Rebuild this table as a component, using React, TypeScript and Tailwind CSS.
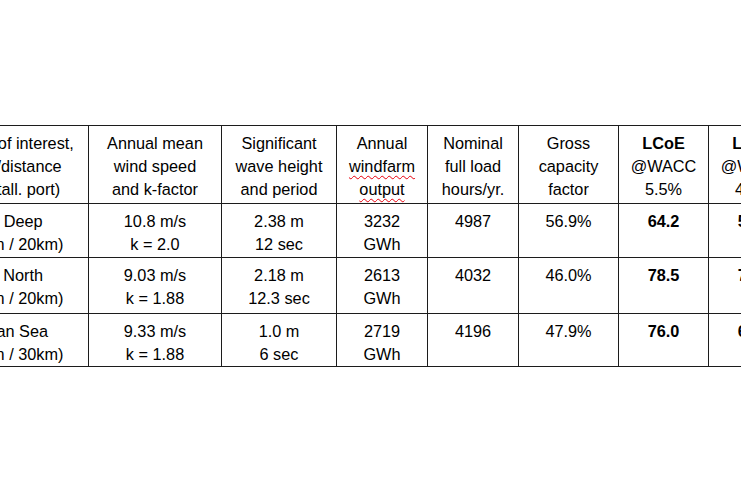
import React from 'react';

type Cell = { lines: React.ReactNode[]; bold?: boolean };

const colWidths = [146, 133, 115, 91, 91, 100, 90, 90];

const Squiggle = ({ children }: { children: React.ReactNode }) => (
  <span className="underline decoration-wavy decoration-red-600 decoration-1 underline-offset-[3px]">
    {children}
  </span>
);

const header: Cell[] = [
  { lines: ['Sites of interest,', 'WD/distance', '(install. port)'] },
  { lines: ['Annual mean', 'wind speed', 'and k-factor'] },
  { lines: ['Significant', 'wave height', 'and period'] },
  { lines: ['Annual', <Squiggle key="w">windfarm</Squiggle>, <Squiggle key="o">output</Squiggle>] },
  { lines: ['Nominal', 'full load', 'hours/yr.'] },
  { lines: ['Gross', 'capacity', 'factor'] },
  { lines: [<b key="l">LCoE</b>, '@WACC', '5.5%'] },
  { lines: [<b key="l">LCoE</b>, '@WACC', '4.0%'] },
];

const rows: Cell[][] = [
  [
    { lines: ['E Deep', '(50m / 20km)'] },
    { lines: ['10.8 m/s', 'k = 2.0'] },
    { lines: ['2.38 m', '12 sec'] },
    { lines: ['3232', 'GWh'] },
    { lines: ['4987'] },
    { lines: ['56.9%'] },
    { lines: ['64.2'], bold: true },
    { lines: ['55.1'], bold: true },
  ],
  [
    { lines: ['E North', '(40m / 20km)'] },
    { lines: ['9.03 m/s', 'k = 1.88'] },
    { lines: ['2.18 m', '12.3 sec'] },
    { lines: ['2613', 'GWh'] },
    { lines: ['4032'] },
    { lines: ['46.0%'] },
    { lines: ['78.5'], bold: true },
    { lines: ['71.4'], bold: true },
  ],
  [
    { lines: ['Man Sea', '(60m / 30km)'] },
    { lines: ['9.33 m/s', 'k = 1.88'] },
    { lines: ['1.0 m', '6 sec'] },
    { lines: ['2719', 'GWh'] },
    { lines: ['4196'] },
    { lines: ['47.9%'] },
    { lines: ['76.0'], bold: true },
    { lines: ['69.2'], bold: true },
  ],
];

function TableCell({ cell, h }: { cell: Cell; h: string }) {
  return (
    <td className={`border border-[#1c1c1c] align-top text-center p-0 pt-[6px] whitespace-nowrap ${h} ${cell.bold ? 'font-bold' : ''}`}>
      {cell.lines.map((l, i) => (
        <div key={i}>{l}</div>
      ))}
    </td>
  );
}

export default function App() {
  const rowHeights = ['h-[54px]', 'h-[56px]', 'h-[53px]'];
  return (
    <div
      className="w-[741px] h-[486px] overflow-hidden bg-white text-black pt-[125px]"
      style={{ fontFamily: '"Liberation Sans", Arial, sans-serif' }}
    >
      <table className="table-fixed border-collapse w-[856px] min-w-[856px] ml-[-58px] text-[16.3px] leading-[23px]">
        <colgroup>
          {colWidths.map((w, i) => (
            <col key={i} style={{ width: w }} />
          ))}
        </colgroup>
        <thead>
          <tr>
            {header.map((c, i) => (
              <TableCell key={i} cell={c} h="h-[78px]" />
            ))}
          </tr>
        </thead>
        <tbody>
          {rows.map((r, ri) => (
            <tr key={ri}>
              {r.map((c, i) => (
                <TableCell key={i} cell={c} h={rowHeights[ri]} />
              ))}
            </tr>
          ))}
        </tbody>
      </table>
    </div>
  );
}
